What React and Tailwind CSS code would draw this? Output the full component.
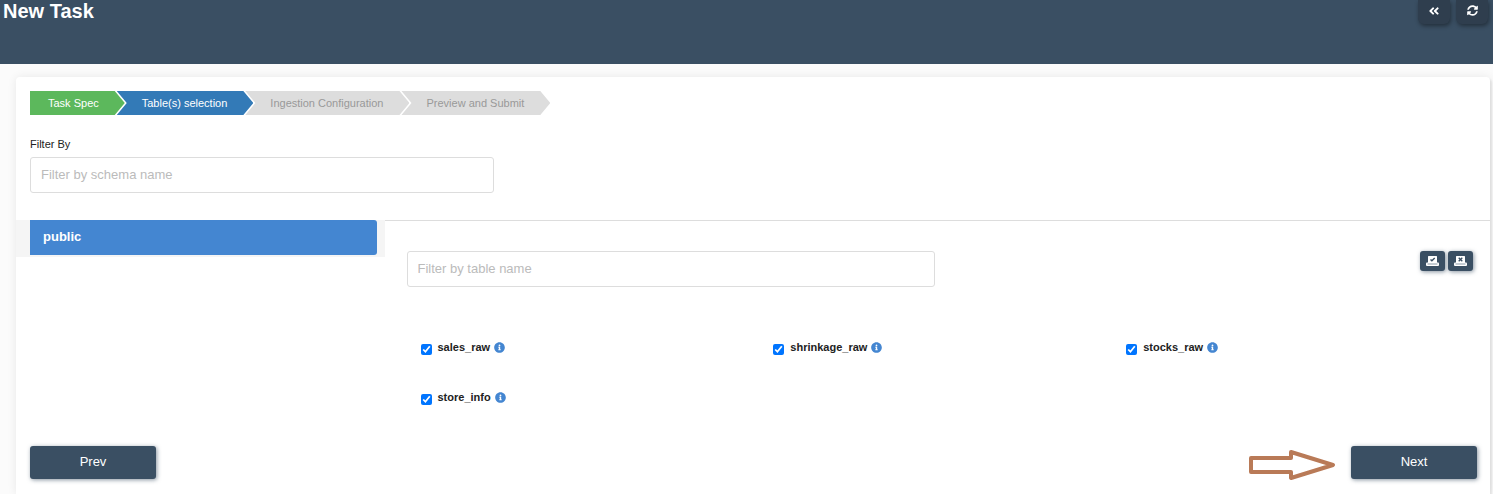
import { FaAngleDoubleLeft, FaInfoCircle, FaSyncAlt } from "react-icons/fa";

function SlotIcon({ mark }) {
  return (
    <svg className="h-[10px] w-[13px]" viewBox="0 0 13 10" aria-hidden="true">
      <path d="M0 7.5Q0 6.5 1 6.5H12Q13 6.5 13 7.5V9Q13 10 12 10H1Q0 10 0 9Z" fill="#fff" />
      <path d="M1.5 8H11.5" stroke="#8b99a6" strokeWidth="1" />
      <path d="M2.5 0H10.5Q11 0 11 .5V7H2V.5Q2 0 2.5 0Z" fill="#fff" />
      <path d={mark} fill="none" stroke="#3a4f63" strokeWidth="1.4" />
    </svg>
  );
}

const steps = [
  {
    label: "Task Spec",
    className:
      "bg-[#5cb85c] pr-[26px] pl-[18px] text-white [clip-path:polygon(0_0,calc(100%-10px)_0,100%_50%,calc(100%-10px)_100%,0_100%)]",
  },
  {
    label: "Table(s) selection",
    className:
      "-ml-2 bg-[#337ab7] pr-[26px] pl-[25px] text-white [clip-path:polygon(0_0,calc(100%-10px)_0,100%_50%,calc(100%-10px)_100%,0_100%,10px_50%)]",
  },
  {
    label: "Ingestion Configuration",
    className:
      "-ml-2 bg-[#ddd] pr-[26px] pl-[25px] text-[#999] [clip-path:polygon(0_0,calc(100%-10px)_0,100%_50%,calc(100%-10px)_100%,0_100%,10px_50%)]",
  },
  {
    label: "Preview and Submit",
    className:
      "-ml-2 bg-[#ddd] pr-[26px] pl-[25px] text-[#999] [clip-path:polygon(0_0,calc(100%-10px)_0,100%_50%,calc(100%-10px)_100%,0_100%,10px_50%)]",
  },
];

const tables = ["sales_raw", "shrinkage_raw", "stocks_raw", "store_info"];

const inputClass =
  "block h-9 w-full rounded-[3px] border border-[#ddd] bg-white px-[10px] pb-[2px] text-[13px] text-[#333] placeholder:text-[#bbb]";
const headerButton =
  "flex h-6 w-8 items-center justify-center rounded-b-md bg-[#2f3e4e] pb-[3px] text-white shadow-[1px_2px_4px_rgba(0,0,0,0.4)]";
const slotButton =
  "flex h-5 w-[25px] items-center justify-center rounded-[3px] bg-[#3a4f63] text-white shadow-[1px_1px_4px_rgba(58,79,99,0.6)]";
const navButton =
  "h-[33px] w-[126px] rounded-[3px] bg-[#3a4f63] pb-px text-[13px] text-white shadow-[1px_1px_4px_rgba(58,79,99,0.6)]";

export default function App() {
  return (
    <div className="min-h-screen bg-[#fbfbfb] font-['Liberation_Sans',Arial,sans-serif] text-[#222]">
      <header className="flex h-16 items-start justify-between bg-[#3a4f63] pl-[3px]">
        <h1 className="text-xl leading-[22px] font-bold text-white">New Task</h1>
        <div className="flex gap-[6px] pr-[5px]">
          <button type="button" aria-label="Back" className={headerButton}>
            <FaAngleDoubleLeft className="size-3" />
          </button>
          <button type="button" aria-label="Refresh" className={headerButton}>
            <FaSyncAlt className="size-[11px]" />
          </button>
        </div>
      </header>

      <main className="pt-[13px] pr-[3px] pl-4">
        <div className="rounded-t bg-white pt-[14px] pb-[13px] shadow-[0_0_10px_rgba(0,0,0,0.08),2px_2px_2px_rgba(0,0,0,0.08)]">
          <ol className="flex pl-[14px] text-[11px] leading-6">
            {steps.map((step) => (
              <li key={step.label} className={step.className}>
                {step.label}
              </li>
            ))}
          </ol>

          <div className="w-1/3 pt-[21px] pr-[13px] pl-[14px]">
            <label htmlFor="schema" className="mb-[5px] block text-[11px] leading-4">
              Filter By
            </label>
            <input id="schema" type="text" placeholder="Filter by schema name" className={inputClass} />
          </div>

          <div className="mt-[27px] flex items-start">
            <div className="w-1/4 bg-[#f5f5f5] pr-2 pb-[2px] pl-[14px]">
              <button
                type="button"
                className="block h-[35px] w-full rounded-r-[3px] bg-[#4486d1] px-[13px] pb-[2px] text-left text-[13px] font-bold text-white"
              >
                public
              </button>
            </div>

            <section className="w-3/4 border-t border-[#ddd] pt-[30px] pr-[17px] pl-[22px]">
              <div className="flex items-start justify-between">
                <div className="w-[49.6%]">
                  <input
                    type="text"
                    aria-label="Filter by table name"
                    placeholder="Filter by table name"
                    className={inputClass}
                  />
                </div>
                <div className="flex gap-[3px]">
                  <button type="button" aria-label="Select all" className={slotButton}>
                    <SlotIcon mark="M4.5 3.4L5.9 4.8L8.7 2" />
                  </button>
                  <button type="button" aria-label="Clear all" className={slotButton}>
                    <SlotIcon mark="M4.7 1.8L8.3 5.2M8.3 1.8L4.7 5.2" />
                  </button>
                </div>
              </div>

              <ul className="mt-[52px] grid grid-cols-3 gap-y-[34px] pr-2">
                {tables.map((name) => (
                  <li key={name} className="flex items-center pl-[14px] text-[11px] leading-4 font-bold">
                    <input id={name} type="checkbox" defaultChecked className="mt-1 size-[11px] accent-[#0075ff]" />
                    <label htmlFor={name} className="pl-[6px]">
                      {name}
                    </label>
                    <FaInfoCircle className="ml-1 size-[11px] text-[#4486d1]" />
                  </li>
                ))}
              </ul>
            </section>
          </div>

          <div className="mt-[41px] flex items-start justify-between pr-[13px] pl-[14px]">
            <button type="button" className={navButton}>
              Prev
            </button>
            <div className="flex items-start gap-[15px]">
              <svg
                className="mt-[3px] h-8 w-[88px]"
                viewBox="0 0 88 32"
                fill="none"
                stroke="#b97a57"
                strokeWidth="4"
                strokeLinejoin="round"
                aria-hidden="true"
              >
                <path d="M3 9H43V3L85 16L43 29V23H3Z" />
              </svg>
              <button type="button" className={navButton}>
                Next
              </button>
            </div>
          </div>
        </div>
      </main>
    </div>
  );
}
